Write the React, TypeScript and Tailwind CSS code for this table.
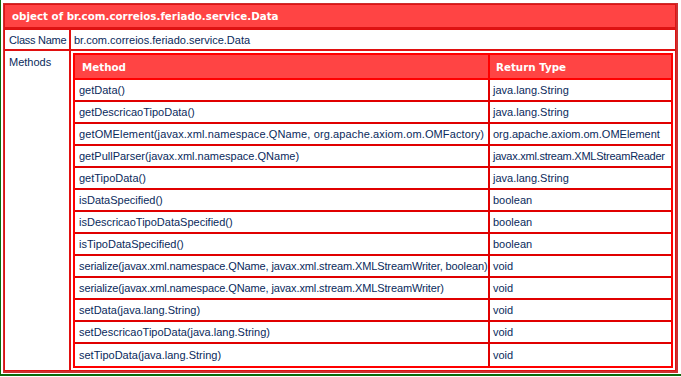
import React from "react";

type Row = { m: string; r: string; mt?: string; rt?: string };

const methods: Row[] = [
  { m: "getData()", r: "java.lang.String" },
  { m: "getDescricaoTipoData()", r: "java.lang.String" },
  { m: "getOMElement(javax.xml.namespace.QName, org.apache.axiom.om.OMFactory)", r: "org.apache.axiom.om.OMElement", mt: "tracking-[0.12px]" },
  { m: "getPullParser(javax.xml.namespace.QName)", r: "javax.xml.stream.XMLStreamReader", rt: "tracking-[-0.25px]" },
  { m: "getTipoData()", r: "java.lang.String" },
  { m: "isDataSpecified()", r: "boolean" },
  { m: "isDescricaoTipoDataSpecified()", r: "boolean" },
  { m: "isTipoDataSpecified()", r: "boolean" },
  { m: "serialize(javax.xml.namespace.QName, javax.xml.stream.XMLStreamWriter, boolean)", r: "void", mt: "tracking-[-0.12px]" },
  { m: "serialize(javax.xml.namespace.QName, javax.xml.stream.XMLStreamWriter)", r: "void", mt: "tracking-[-0.12px]" },
  { m: "setData(java.lang.String)", r: "void" },
  { m: "setDescricaoTipoData(java.lang.String)", r: "void" },
  { m: "setTipoData(java.lang.String)", r: "void" },
];

const body = "font-['Liberation_Sans',Arial,sans-serif] text-[11px] leading-[14px] text-[#0a2a5c]";
const head = "font-['DejaVu_Sans',Verdana,sans-serif] text-[10.3px] leading-[14px] font-bold text-white";

export default function App() {
  return (
    <div className="w-[681px] h-[377px] bg-white">
      <div className="h-[376px] border-l border-b-2 border-[#0b6b0b] pl-[2px] pt-[3px]">
        <table className="table-fixed w-[675px] border-separate border-spacing-0 border border-r-2 border-b-2 border-[#cc3030]">
          <colgroup>
            <col className="w-[66px]" />
            <col />
          </colgroup>
          <tbody>
            <tr>
              <td colSpan={2} className={`h-[25px] bg-[#ff4444] border border-b-2 border-[#dd1414] pl-[7px] pr-0 py-0 ${head}`}>
                object of br.com.correios.feriado.service.Data
              </td>
            </tr>
            <tr>
              <td className={`h-[21px] border border-[#e01010] pl-[4px] pr-0 py-0 whitespace-nowrap overflow-hidden tracking-[-0.25px] ${body}`}>Class Name</td>
              <td className={`h-[21px] border border-[#e01010] pl-[3px] py-0 ${body}`}>br.com.correios.feriado.service.Data</td>
            </tr>
            <tr>
              <td className={`align-top border border-[#e01010] pl-[4px] pt-[4px] ${body}`}>Methods</td>
              <td className="border border-[#e01010] p-[2px]">
                <table className="table-fixed w-full border-separate border-spacing-0 border-2 border-[#ff0000]">
                  <colgroup>
                    <col />
                    <col className="w-[181px]" />
                  </colgroup>
                  <tbody>
                    <tr>
                      <td className={`h-[25px] bg-[#ff4444] border-b-2 border-r-2 border-[#ff0000] pl-[7px] py-0 ${head}`}>Method</td>
                      <td className={`h-[25px] bg-[#ff4444] border-b-2 border-[#ff0000] pl-[6px] py-0 ${head}`}>Return Type</td>
                    </tr>
                    {methods.map((row, i) => (
                      <tr key={i}>
                        <td className={`h-[22px] ${i < methods.length - 1 ? "border-b-2" : ""} border-r-2 border-[#e00000] pl-[4px] pr-0 py-0 whitespace-nowrap overflow-hidden ${body} ${row.mt ?? ""}`}>{row.m}</td>
                        <td className={`h-[22px] ${i < methods.length - 1 ? "border-b-2" : ""} border-[#e00000] pl-[3px] pr-0 py-0 whitespace-nowrap overflow-hidden ${body} ${row.rt ?? ""}`}>{row.r}</td>
                      </tr>
                    ))}
                  </tbody>
                </table>
              </td>
            </tr>
          </tbody>
        </table>
      </div>
    </div>
  );
}
